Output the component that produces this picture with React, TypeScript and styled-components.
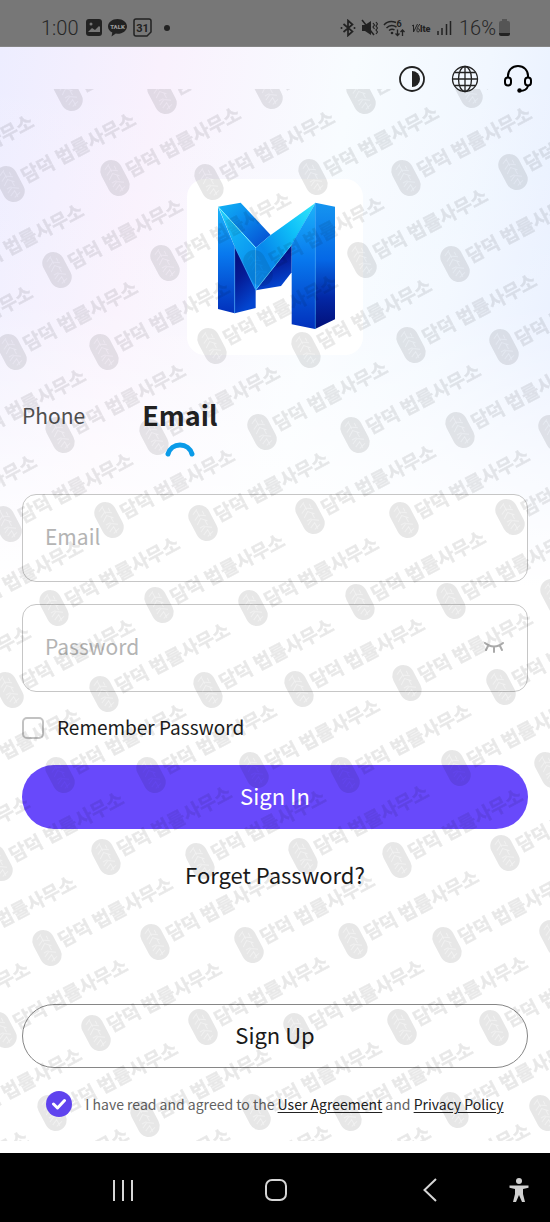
import React from "react";
import styled, { createGlobalStyle } from "styled-components";

const uiFont = `"Noto Sans CJK SC", "Noto Sans", sans-serif`;

const GlobalStyle = createGlobalStyle`
  * { box-sizing: border-box; }
  body { margin: 0; background: #000; font-family: ${uiFont}; }
  button, input { font-family: inherit; }
`;

const Page = styled.div`
  display: flex;
  flex-direction: column;
  min-height: 100vh;
`;

const StatusBar = styled.header`
  display: flex;
  align-items: center;
  justify-content: space-between;
  height: 47px;
  padding: 9px 40px 0 41px;
  background: #777;
  border-bottom: 1px solid #858585;
  color: #262626;
  font: 300 20px/24px Roboto, sans-serif;
`;

const StatusGroup = styled.div<{ $gap: number }>`
  display: flex;
  align-items: center;
  gap: ${(p) => p.$gap}px;
  svg { display: block; }
`;

const Screen = styled.main`
  position: relative;
  flex: 1;
  padding: 18px 22px 24px;
  background:
    linear-gradient(to bottom, rgba(255, 255, 255, 0) 0, rgba(255, 255, 255, 0.15) 260px, rgba(255, 255, 255, 0.7) 420px, #fff 540px),
    linear-gradient(100deg, #ededff 0%, #f9f1fd 22%, #f8fcff 48%, #f1f7ff 66%, #e5edff 86%, #e9f0ff 100%);
`;

const TopActions = styled.div`
  display: flex;
  justify-content: flex-end;
  gap: 25px;
  margin-right: -4px;
`;

const IconButton = styled.button`
  display: grid;
  place-items: center;
  width: 28px;
  height: 28px;
  padding: 0;
  border: 0;
  background: none;
  color: #222;
  cursor: pointer;
`;

const LogoCard = styled.div`
  width: 176px;
  height: 176px;
  margin: 86px auto 0;
  border-radius: 18px;
  background: #fff;
  svg { display: block; }
`;

const Tabs = styled.div`
  display: flex;
  align-items: flex-start;
  gap: 57px;
  height: 66px;
  margin-top: 40px;
`;

const Tab = styled.button<{ $active?: boolean }>`
  display: flex;
  flex-direction: column;
  align-items: center;
  gap: 6px;
  padding: 0;
  border: 0;
  background: none;
  color: ${(p) => (p.$active ? "#222" : "#505050")};
  font-size: ${(p) => (p.$active ? 27 : 21)}px;
  font-weight: ${(p) => (p.$active ? 700 : 400)};
  line-height: 40px;
  cursor: pointer;
`;

const Form = styled.form`
  display: flex;
  flex-direction: column;
  margin-top: 33px;
`;

const Field = styled.label`
  display: flex;
  align-items: center;
  height: 88px;
  margin-bottom: 22px;
  padding: 0 19px 2px 22px;
  border: 1px solid #c6c6c6;
  border-radius: 14px;
  background: #fff;
`;

const FieldInput = styled.input`
  flex: 1;
  min-width: 0;
  height: 40px;
  padding: 0 0 2px;
  border: 0;
  outline: 0;
  background: none;
  color: #222;
  font-size: 21px;
  line-height: 32px;
  &::placeholder { color: #b4b4b4; opacity: 1; }
`;

const Remember = styled.label`
  display: flex;
  align-items: center;
  gap: 13px;
  height: 28px;
  color: #1c1c1c;
  font-size: 19px;
  line-height: 28px;
  span { padding-bottom: 2px; }
`;

const SquareCheck = styled.input`
  appearance: none;
  width: 22px;
  height: 22px;
  margin: 0;
  border: 2px solid #c2c2c2;
  border-radius: 5px;
  background: #fff;
`;

const PillButton = styled.button<{ $filled?: boolean }>`
  width: 100%;
  height: 64px;
  padding: 0 0 4px;
  border: ${(p) => (p.$filled ? "0" : "1px solid #868686")};
  border-radius: 32px;
  background: ${(p) => (p.$filled ? "#6849fb" : "#fff")};
  color: ${(p) => (p.$filled ? "#fff" : "#1a1a1a")};
  font-size: 22px;
  line-height: 32px;
  cursor: pointer;
`;

const SignInButton = styled(PillButton)`
  margin-top: 23px;
`;

const ForgetLink = styled.a`
  align-self: center;
  margin: 29px 0 114px;
  color: #1a1a1a;
  font-size: 22px;
  line-height: 32px;
  text-decoration: none;
`;

const Agreement = styled.div`
  display: flex;
  align-items: center;
  justify-content: center;
  gap: 13px;
  margin-top: 23px;
  color: #626262;
  font-size: 14px;
  line-height: 26px;
  white-space: nowrap;
  a { color: #222; text-underline-offset: 2px; }
`;

const RoundCheck = styled.input`
  appearance: none;
  flex: none;
  width: 26px;
  height: 26px;
  margin: 0;
  border-radius: 50%;
  background: #5f43ee;
`;

const RoundCheckBox = styled.span`
  display: grid;
  place-items: center;
  z-index: 1;
  > * { grid-area: 1 / 1; }
  svg { pointer-events: none; }
`;

const WatermarkLayer = styled.svg`
  position: absolute;
  top: 42px;
  left: 0;
  width: 100%;
  height: calc(100% - 54px);
  overflow: hidden;
  pointer-events: none;
  text {
    font: 700 19px "Noto Sans CJK KR", sans-serif;
  }
`;

const NavBar = styled.nav`
  display: grid;
  grid-template-columns: 1fr 1fr 1fr 24px;
  justify-items: center;
  align-items: center;
  height: 69px;
  padding: 4px 19px 0 46px;
  background: #000;
`;

const NavButton = styled(IconButton)`
  width: 24px;
  color: #d6d6d6;
`;

/* Centres of the repeated seal stamps, in the coordinates of the watermark layer. */
const stamps: [number, number][] = [
  [68, 4], [162, 7], [268, 2], [361, 7], [468, 1],
  [-92, 97], [10, 95], [115, 89], [209, 93], [313, 88], [406, 89], [513, 83],
  [-42, 186], [57, 181], [165, 174], [258, 179], [362, 171], [455, 175],
  [-93, 268], [12, 263], [104, 263], [212, 257], [306, 261], [411, 256], [504, 258],
  [-40, 351], [60, 346], [154, 348], [262, 343], [355, 346], [460, 341], [553, 344],
  [-89, 437], [7, 435], [109, 431], [203, 434], [310, 427], [404, 431], [510, 428],
  [-43, 522], [54, 519], [159, 516], [253, 519], [360, 513], [451, 512], [555, 508],
  [-95, 608], [9, 601], [104, 605], [208, 601], [299, 600], [407, 594], [501, 598],
  [-46, 690], [60, 686], [151, 686], [254, 681], [345, 686], [456, 679], [549, 681],
  [-96, 778], [-2, 774], [106, 768], [200, 772], [303, 767], [397, 771], [505, 764],
  [-50, 858], [47, 859], [155, 853], [249, 856], [353, 852], [447, 856], [554, 849],
  [-96, 944], [2, 941], [96, 944], [203, 938], [298, 942], [402, 938], [494, 939],
  [-44, 1030], [52, 1024], [145, 1030], [256, 1023], [347, 1024], [454, 1021], [544, 1024],
  [-97, 1113], [3, 1110], [104, 1110], [205, 1107], [305, 1108], [404, 1105], [505, 1103],
];

const Watermark = () => (
  <WatermarkLayer aria-hidden="true">
    <defs>
      <mask id="engraving" maskUnits="userSpaceOnUse" x="-12" y="-20" width="24" height="40">
        <rect x="-12" y="-20" width="24" height="40" fill="#fff" />
        <path
          d="M-5-12 1-15M0-14v7M-6-6 0-9 6-5M-6-1 0-5 5 0M-5 3h5M3-2v6M-6 7 0 4 6 8M-5 11 1 8v7M-2 14 5 12M5-11v4"
          fill="none"
          stroke="#000"
          strokeOpacity="0.4"
          strokeWidth="1"
        />
      </mask>
      <g id="seal">
        <rect x="-11" y="-19" width="22" height="38" rx="11" fill="#000" fillOpacity="0.095" mask="url(#engraving)" />
      </g>
    </defs>
    {stamps.map(([x, y]) => (
      <g key={`${x},${y}`} transform={`translate(${x} ${y}) rotate(-28)`}>
        <use href="#seal" />
        <text x="14" y="7" fill="#000" stroke="#000" strokeWidth="0.5" opacity="0.085">담덕 법률사무소</text>
      </g>
    ))}
  </WatermarkLayer>
);

const Logo = () => (
  <svg width="176" height="176" viewBox="51 42 528 528" role="img" aria-label="M">
    <defs>
      <linearGradient id="front" x1="0" y1="0" x2="0" y2="1">
        <stop offset="0" stopColor="#1cb4fa" />
        <stop offset="0.45" stopColor="#0878ee" />
        <stop offset="1" stopColor="#0230bc" />
      </linearGradient>
      <linearGradient id="side" x1="0" y1="0" x2="0" y2="1">
        <stop offset="0" stopColor="#1595f0" />
        <stop offset="0.45" stopColor="#0568e6" />
        <stop offset="0.75" stopColor="#0328a6" />
        <stop offset="1" stopColor="#020f78" />
      </linearGradient>
      <linearGradient id="dark" x1="0" y1="0" x2="0.3" y2="1">
        <stop offset="0" stopColor="#040a74" />
        <stop offset="0.5" stopColor="#051b96" />
        <stop offset="1" stopColor="#0345d0" />
      </linearGradient>
      <linearGradient id="cap" x1="0" y1="0" x2="1" y2="1">
        <stop offset="0" stopColor="#12b5f4" />
        <stop offset="0.4" stopColor="#0a8cee" />
        <stop offset="1" stopColor="#0647ce" />
      </linearGradient>
      <linearGradient id="vLeft" x1="0" y1="0" x2="0.6" y2="1">
        <stop offset="0" stopColor="#22d2fb" />
        <stop offset="0.5" stopColor="#10aaf4" />
        <stop offset="1" stopColor="#078cf0" />
      </linearGradient>
      <linearGradient id="vRight" x1="1" y1="0" x2="0" y2="1">
        <stop offset="0" stopColor="#35e8fa" />
        <stop offset="0.35" stopColor="#0fc0f8" />
        <stop offset="0.7" stopColor="#0789ec" />
        <stop offset="1" stopColor="#1191f4" />
      </linearGradient>
    </defs>
    <path d="M144 125 194 245v200l-50-13z" fill="url(#front)" />
    <path d="m194 243 63 130v56l-63 16z" fill="url(#dark)" />
    <path d="m144 125 68-12 90 97-45 38z" fill="url(#cap)" />
    <path d="m257 376 108-138v84l-32 41z" fill="url(#dark)" />
    <path d="m146 127 111 121v127l-63-130z" fill="url(#vLeft)" />
    <path d="m257 248 45-38 135-97-72 127-108 135z" fill="url(#vRight)" />
    <path d="M437 113 365 238v240l70 14z" fill="url(#front)" />
    <path d="m436 113 59 12v338l-60 29z" fill="url(#side)" />
    <g fill="none" strokeLinecap="round">
      <path d="M146 127 257 248" stroke="#7df0ff" strokeWidth="3" />
      <path d="m257 375 108-136" stroke="#57d6ff" strokeWidth="2" />
      <path d="m194 245 63 130M194 247v196" stroke="#34a0f8" strokeWidth="2" />
      <path d="M436 115v376" stroke="#3ba6f8" strokeWidth="2" />
      <path d="M257 250v120" stroke="#35bdf8" strokeWidth="1" />
    </g>
  </svg>
);

const StatusLeftIcons = () => (
  <StatusGroup $gap={6}>
    <svg width="16" height="17" viewBox="0 0 16 17">
      <rect width="16" height="17" rx="3" fill="#222" />
      <path d="m2 13 4-4 3 2 4-4 1 1v5z" fill="#777" />
      <circle cx="5" cy="5" r="1.500" fill="#777" />
    </svg>
    <svg width="19" height="18" viewBox="0 0 19 18">
      <path d="M9.500 0C4.200 0 0 3.300 0 7.400c0 2.700 1.700 4.900 4.300 6.200L3.500 17.500l4.300-2.900 1.700.1c5.300 0 9.500-3.200 9.500-7.300S14.800 0 9.500 0z" fill="#222" />
      <text x="9.500" y="10" textAnchor="middle" fill="#9a9a9a" fontFamily="Roboto" fontWeight="900" fontSize="6">TALK</text>
    </svg>
    <svg width="19" height="19" viewBox="0 0 19 19">
      <path d="M3 1h13a2 2 0 0 1 2 2v11l-4 4H3a2 2 0 0 1-2-2V3a2 2 0 0 1 2-2z" fill="none" stroke="#222" strokeWidth="1.500" />
      <text x="9.500" y="13.500" textAnchor="middle" fill="#222" fontFamily="Roboto" fontWeight="700" fontSize="11">31</text>
    </svg>
    <svg width="18" height="18" viewBox="0 0 18 18">
      <circle cx="9" cy="9" r="3" fill="#222" />
    </svg>
  </StatusGroup>
);

const StatusRightIcons = () => (
  <StatusGroup $gap={5}>
    <svg width="16" height="18" viewBox="0 0 16 18" fill="none" stroke="#222" strokeWidth="1.700">
      <path d="m3.500 5 9 7.500L8 16.500v-15l4.500 4L3.500 13" />
      <circle cx="1.500" cy="9" r="1" fill="#222" stroke="none" />
      <circle cx="14.500" cy="9" r="1" fill="#222" stroke="none" />
    </svg>
    <svg width="17" height="18" viewBox="0 0 17 18" fill="none" stroke="#222" strokeWidth="1.500">
      <path d="M1 6h3l6-4v14l-6-4H1z" fill="#222" stroke="none" />
      <path d="m1 1 12 15" />
      <path d="m12 4 1.500 2L12 8l1.500 2M15 3l1.500 2L15 7l1.500 2L15 11l1.500 2L15 15" strokeWidth="1.200" />
    </svg>
    <svg width="23" height="18" viewBox="0 0 23 18" fill="none" stroke="#222" strokeWidth="1.500">
      <path d="M1 6C4 2.500 9 2 13 3.500M3.500 9C6 6.500 10 6 13.500 8M6 11.500c2-1.500 4-1.500 5.500-.5" />
      <circle cx="9" cy="14" r="1.300" fill="#222" stroke="none" />
      <path d="M14.500 10.500v6m-2-2 2 2 2-2M19.500 17v-6m-2 2 2-2 2 2" strokeWidth="1.300" />
      <text x="13.500" y="8" fill="#222" stroke="none" fontFamily="Roboto" fontWeight="700" fontSize="9">6</text>
    </svg>
    <svg width="21" height="18" viewBox="0 0 21 18">
      <path d="m1 7 1.500-1V13L6.500 5M9 5C6 8 5 13 7 13s2-4 0-3" fill="none" stroke="#222" />
      <text x="9" y="13" fill="#222" fontFamily="Roboto" fontWeight="900" fontSize="9">lte</text>
    </svg>
    <svg width="15" height="16" viewBox="0 0 15 16" stroke="#222" strokeWidth="1.500">
      <path d="M1 15v-4M5 15V8M9.500 15V4M13.500 15V1" />
    </svg>
  </StatusGroup>
);

const Battery = () => (
  <svg width="11" height="17" viewBox="0 0 11 17">
    <path d="M3 0h5v2h1a2 2 0 0 1 2 2v11H0V4a2 2 0 0 1 2-2h1z" fill="#555" />
    <path d="M0 14h11v1a2 2 0 0 1-2 2H2a2 2 0 0 1-2-2z" fill="#222" />
  </svg>
);

export default function App() {
  return (
    <Page>
      <GlobalStyle />
      <StatusBar>
        <StatusGroup $gap={8}>
          <span>1:00</span>
          <StatusLeftIcons />
        </StatusGroup>
        <StatusGroup $gap={7}>
          <StatusRightIcons />
          <StatusGroup $gap={3}>
            <span>16%</span>
            <Battery />
          </StatusGroup>
        </StatusGroup>
      </StatusBar>

      <Screen>
        <TopActions>
          <IconButton type="button" aria-label="Theme">
            <svg width="28" height="28" viewBox="0 0 28 28">
              <circle cx="14" cy="14" r="12" fill="none" stroke="currentColor" strokeWidth="1.800" />
              <path d="M14 6a8 8 0 0 1 0 16z" fill="currentColor" />
            </svg>
          </IconButton>
          <IconButton type="button" aria-label="Language">
            <svg width="28" height="28" viewBox="0 0 28 28" fill="none" stroke="currentColor" strokeWidth="1.300">
              <circle cx="14" cy="14" r="12.500" />
              <ellipse cx="14" cy="14" rx="6.500" ry="12.500" />
              <path d="M14 1.500v25M1.500 14h25M3.500 7.500h21M3.500 20.500h21" />
            </svg>
          </IconButton>
          <IconButton type="button" aria-label="Support">
            <svg width="28" height="28" viewBox="0 0 28 28" fill="none" stroke="#000" strokeWidth="2" strokeLinecap="round">
              <path d="M4 12C3.500 5 8.500 1 14 1s10.500 4 10 11" />
              <rect x="1" y="12.500" width="6" height="8" rx="3" />
              <rect x="21" y="12.500" width="6" height="8" rx="3" />
              <path d="M24 21c-1 3-4 5-8 5" />
              <circle cx="15.500" cy="25.500" r="2.200" fill="#000" stroke="none" />
            </svg>
          </IconButton>
        </TopActions>

        <LogoCard>
          <Logo />
        </LogoCard>

        <Tabs>
          <Tab type="button">Phone</Tab>
          <Tab type="button" $active>
            Email
            <svg width="30" height="16" viewBox="0 0 30 16">
              <path d="M3 13A12.500 12.500 0 0 1 27 13" fill="none" stroke="#0a9be8" strokeWidth="5" strokeLinecap="round" />
            </svg>
          </Tab>
        </Tabs>

        <Form onSubmit={(e) => e.preventDefault()}>
          <Field>
            <FieldInput type="email" placeholder="Email" aria-label="Email" />
          </Field>
          <Field>
            <FieldInput type="password" placeholder="Password" aria-label="Password" />
            <IconButton type="button" aria-label="Show password">
              <svg width="22" height="14" viewBox="0 0 22 14" fill="none" stroke="#aaa" strokeWidth="2" strokeLinecap="round">
                <path d="M2 3c5 4.500 13 4.500 18 0M11 7v5M5 6 3 10M17 6l2 4" />
              </svg>
            </IconButton>
          </Field>
          <Remember>
            <SquareCheck type="checkbox" />
            <span>Remember Password</span>
          </Remember>
          <SignInButton type="submit" $filled>Sign In</SignInButton>
          <ForgetLink href="#forget">Forget Password?</ForgetLink>
          <PillButton type="button">Sign Up</PillButton>
          <Agreement>
            <RoundCheckBox>
              <RoundCheck type="checkbox" id="agree" defaultChecked />
              <svg width="16" height="12" viewBox="0 0 16 12" fill="none" stroke="#fff" strokeWidth="3" strokeLinecap="round" strokeLinejoin="round">
                <path d="m2.500 6 4 4 7-7.500" />
              </svg>
            </RoundCheckBox>
            <label htmlFor="agree">
              I have read and agreed to the <a href="#user-agreement">User Agreement</a> and{" "}
              <a href="#privacy-policy">Privacy Policy</a>
            </label>
          </Agreement>
        </Form>
        <Watermark />
      </Screen>

      <NavBar>
        <NavButton type="button" aria-label="Recents">
          <svg width="24" height="24" viewBox="0 0 24 24" stroke="currentColor" strokeWidth="2">
            <path d="M3 2v21M12 2v21M21 2v21" />
          </svg>
        </NavButton>
        <NavButton type="button" aria-label="Home">
          <svg width="24" height="24" viewBox="0 0 24 24" fill="none" stroke="currentColor" strokeWidth="2">
            <rect x="2" y="2" width="20" height="20" rx="6" />
          </svg>
        </NavButton>
        <NavButton type="button" aria-label="Back">
          <svg width="24" height="24" viewBox="0 0 24 24" fill="none" stroke="currentColor" strokeWidth="2">
            <path d="M18 1 6.500 12 18 23" />
          </svg>
        </NavButton>
        <NavButton type="button" aria-label="Accessibility">
          <svg width="24" height="26" viewBox="0 0 24 26" fill="#d0d0d0">
            <circle cx="12" cy="4" r="3" />
            <path d="M2.500 8.500h19v2.300L16 12v5l2 8h-3l-3-7-3 7H6l2-8v-5l-5.500-1.200z" />
          </svg>
        </NavButton>
      </NavBar>
    </Page>
  );
}
